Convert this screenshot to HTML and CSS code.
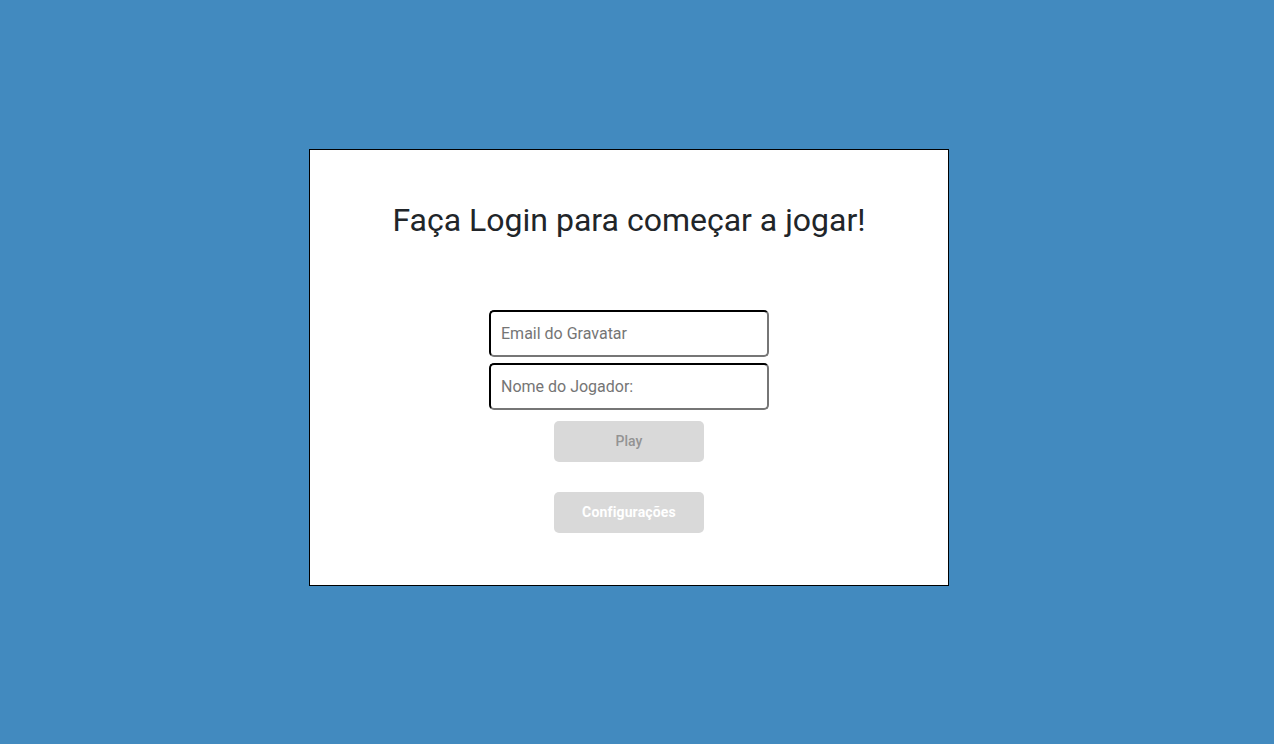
FILE: index.html
```html
<!DOCTYPE html>
<html lang="pt-BR">
<head>
<meta charset="utf-8">
<title>Login</title>
<link rel="stylesheet" href="styles.css">
</head>
<body>
<div class="page">
  <div class="card">
    <h2 class="title">Faça Login para começar a jogar!</h2>
    <form class="form">
      <input class="field" type="email" placeholder="Email do Gravatar">
      <input class="field" type="text" placeholder="Nome do Jogador:">
      <button class="btn btn-play" type="button" disabled>Play</button>
      <button class="btn btn-config" type="button">Configurações</button>
    </form>
  </div>
</div>
</body>
</html>
```
FILE: styles.css
```css
html, body {
  margin: 0;
  padding: 0;
  height: 100%;
}
body {
  background: #428abf;
  font-family: Roboto, "Liberation Sans", Arial, sans-serif;
}
.page {
  padding: 149px 0 0 309px;
}
.card {
  width: 638px;
  background: #fff;
  border: 1px solid #000;
  padding: 51px 0 52px;
  display: flex;
  flex-direction: column;
  align-items: center;
}
.title {
  margin: 0 0 71px;
  font-size: 32px;
  font-weight: 400;
  line-height: 38px;
  color: #212529;
}
.form {
  display: flex;
  flex-direction: column;
  align-items: center;
}
.field {
  box-sizing: border-box;
  width: 280px;
  height: 47px;
  margin: 0 0 6px;
  padding: 0 10px;
  border: 2px inset;
  border-color: #141414 #767676 #767676 #141414;
  border-radius: 5px;
  font-family: Roboto, "Liberation Sans", Arial, sans-serif;
  font-size: 16px;
  color: #212529;
  background: #fff;
}
.field:last-of-type {
  margin-bottom: 0;
}
.field::placeholder {
  color: #757575;
}
.btn {
  box-sizing: border-box;
  width: 150px;
  height: 41px;
  border: none;
  border-radius: 5px;
  background: #d9d9d9;
  font-family: Roboto, "Liberation Sans", Arial, sans-serif;
  font-size: 14px;
  padding: 0 0 2px;
}
.btn-play {
  margin-top: 11px;
  color: #939393;
  font-weight: 500;
}
.btn-config {
  margin-top: 30px;
  color: #fff;
  font-weight: 700;
  letter-spacing: 0.15px;
}
```
